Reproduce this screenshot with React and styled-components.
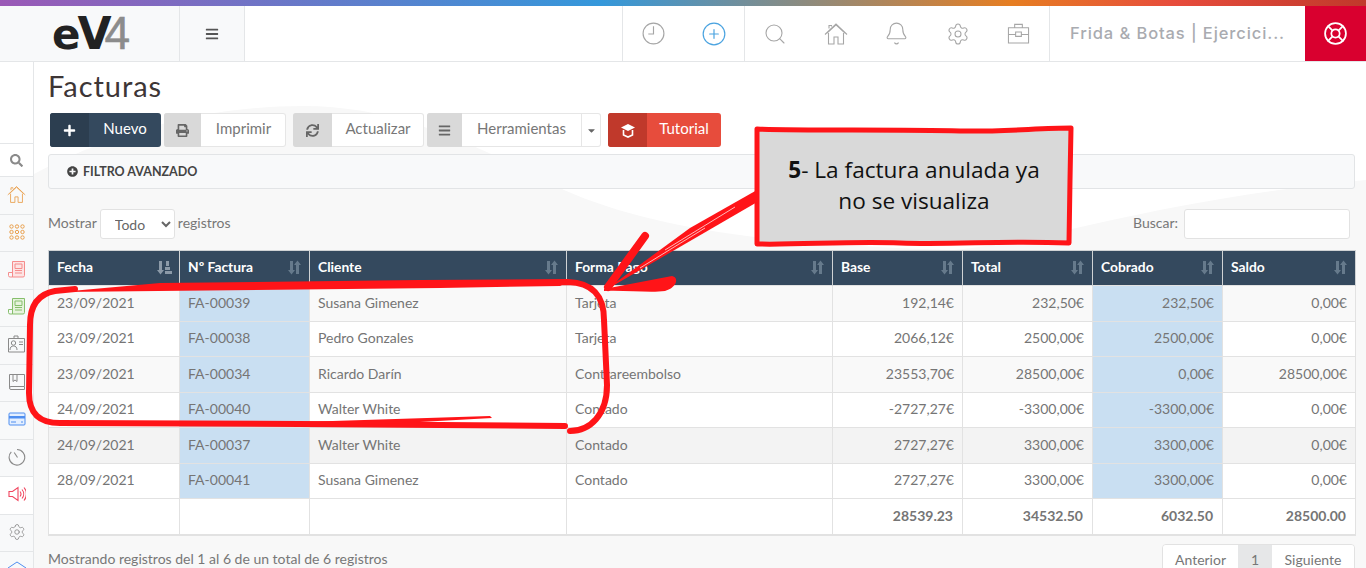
import React from 'react';
import styled, { createGlobalStyle } from 'styled-components';
import { Search, Bell, Settings, LifeBuoy, CirclePlus } from 'lucide-react';
import { FaPlus, FaPrint, FaSync, FaBars, FaCaretDown, FaPlusCircle, FaSearch } from 'react-icons/fa';

const GlobalStyle = createGlobalStyle`
  html, body { margin: 0; padding: 0; background: #fff; }
  body { font-family: "Lato", "Open Sans", sans-serif; color: #666; }
`;

const Shell = styled.div`
  position: relative;
  height: 100vh;
  overflow: hidden;
  background: #fff;
`;

const Stripe = styled.div`
  height: 6px;
  background: linear-gradient(90deg, #9b59b6 0%, #3498db 44%, #e67e22 74%, #e74c3c 86%, #c0392b 100%);
`;

const TopBar = styled.header`
  display: flex;
  height: 56px;
  border-bottom: 1px solid #e4e6e8;
  box-sizing: border-box;
`;

const LogoCell = styled.div`
  width: 180px;
  box-sizing: border-box;
  padding: 0 0 1px 52px;
  background: #f8f9fa;
  border-right: 1px solid #e4e6e8;
  display: flex;
  align-items: baseline;
  font-family: "DejaVu Sans", sans-serif;
  font-size: 44px;
  line-height: 54px;
  font-weight: 700;
  color: #222;
`;

const LogoE = styled.span`
  font-size: 42px;
  letter-spacing: -3px;
`;

const LogoV = styled.span`
  letter-spacing: -7px;
`;

const LogoFour = styled.span`
  font-family: "Liberation Sans", sans-serif;
  font-size: 46px;
  font-weight: 400;
  color: #8c8c8c;
  -webkit-text-stroke: 0.6px #8c8c8c;
`;

const MenuCell = styled.div`
  width: 65px;
  box-sizing: border-box;
  background: #f8f9fa;
  border-right: 1px solid #e4e6e8;
  display: flex;
  align-items: center;
  justify-content: center;
  color: #555;
  font-size: 14px;
`;

const Spacer = styled.div`
  flex: 1;
`;

const IconGroup = styled.div`
  display: flex;
  width: ${(p) => p.$w}px;
  box-sizing: border-box;
  border-left: 1px solid #e4e6e8;
`;

const TopIcon = styled.div`
  flex: 1;
  display: flex;
  align-items: center;
  justify-content: center;
  color: ${(p) => (p.$active ? '#4aa3e0' : '#a6a6a6')};
`;

const CompanyCell = styled.div`
  width: 256px;
  box-sizing: border-box;
  padding: 0 0 2px 20px;
  border-left: 1px solid #e4e6e8;
  display: flex;
  align-items: center;
  font-family: "Inter", sans-serif;
  font-size: 16.5px;
  font-weight: 500;
  letter-spacing: 0.9px;
  color: #a9abb0;
  white-space: nowrap;
`;

const HelpCell = styled.div`
  width: 61px;
  background: #d9002f;
  display: flex;
  align-items: center;
  justify-content: center;
  color: #fff;
`;

const Body = styled.div`
  display: flex;
`;

const Sidebar = styled.nav`
  width: 34px;
  flex: none;
  box-sizing: border-box;
  padding-top: 81px;
  border-right: 1px solid #e4e6e8;
`;

const SideItem = styled.div`
  height: ${(p) => (p.$short ? '33px' : '37.5px')};
  box-sizing: border-box;
  border-top: 1px solid #e4e6e8;
  padding-bottom: ${(p) => (p.$short ? 0 : 2)}px;
  background: ${(p) => (p.$plain ? '#fff' : '#f8f9fa')};
  display: flex;
  align-items: center;
  justify-content: center;
  color: ${(p) => p.$color || '#8a8a8a'};
`;

const Main = styled.main`
  position: relative;
  flex: 1;
  min-width: 0;
  padding: 7px 11px 0 14px;
`;

const Swoosh = styled.svg`
  position: absolute;
  left: 0;
  top: 0;
  width: 100%;
  height: 506px;
`;

const Content = styled.div`
  position: relative;
`;

const Title = styled.h1`
  margin: 0;
  font-size: 29px;
  line-height: 34px;
  font-weight: 400;
  letter-spacing: 0.95px;
  color: #3d3636;
`;

const Toolbar = styled.div`
  display: flex;
  gap: 3px;
  margin: 10px 0 0 2px;
  height: 34px;
`;

const Btn = styled.div`
  display: flex;
  margin-left: ${(p) => p.$offset || 0}px;
  border-radius: 3px;
  overflow: hidden;
  font-size: 15px;
  background: ${(p) => p.$bg || '#fff'};
  color: ${(p) => (p.$bg ? '#fff' : '#777')};
  box-shadow: ${(p) => (p.$bg ? 'none' : 'inset 0 0 0 1px #e6e6e6')};
`;

const BtnIcon = styled.span`
  width: ${(p) => p.$w}px;
  display: flex;
  align-items: center;
  justify-content: center;
  background: ${(p) => p.$bg || '#d9d9d9'};
  color: ${(p) => (p.$bg ? '#fff' : '#666')};
  font-size: 13px;
`;

const BtnLabel = styled.span`
  width: ${(p) => p.$w}px;
  box-sizing: border-box;
  padding-bottom: 4px;
  display: flex;
  align-items: center;
  justify-content: center;
`;

const BtnCaret = styled.span`
  width: 19px;
  display: flex;
  align-items: center;
  justify-content: center;
  border-left: 1px solid #e6e6e6;
  font-size: 11px;
  color: #666;
`;

const FilterPanel = styled.div`
  height: 35px;
  box-sizing: border-box;
  margin-top: 7px;
  padding: 0 0 1px 18px;
  display: flex;
  align-items: center;
  gap: 5px;
  background: #f8f9fa;
  border: 1px solid #e2e4e6;
  border-radius: 3px;
  font-size: 12.5px;
  font-weight: 700;
  color: #444;
  svg { font-size: 11px; }
`;

const ControlRow = styled.div`
  display: flex;
  align-items: center;
  justify-content: space-between;
  margin-top: 20px;
  height: 30px;
  padding-right: 5px;
  font-size: 14px;
  color: #777;
`;

const ControlSide = styled.div`
  display: flex;
  align-items: center;
  gap: 3px;
`;

const ControlLabel = styled.span`
  margin-bottom: 3px;
`;

const PageSize = styled.select`
  width: 75px;
  height: 30px;
  padding-left: 10px;
  background: #fff;
  border: 1px solid #e2e2e2;
  border-radius: 3px;
  font: inherit;
  color: #666;
`;

const SearchBox = styled.input`
  width: 166px;
  height: 30px;
  box-sizing: border-box;
  margin-left: 3px;
  background: #fff;
  border: 1px solid #e2e2e2;
  border-radius: 3px;
`;

const Table = styled.table`
  width: 1307px;
  margin-top: 11px;
  table-layout: fixed;
  border-collapse: collapse;
  font-size: 14px;
  color: #757575;
`;

const HeadCell = styled.th`
  position: relative;
  height: 35px;
  padding: 0 8px 4px;
  box-sizing: border-box;
  background: #34495e;
  border: 1px solid #cfd2d4;
  border-width: 1px 1px 0;
  color: #fff;
  font-size: 13.8px;
  font-weight: 700;
  text-align: left;
`;

const SortMark = styled.svg`
  position: absolute;
  right: 7px;
  top: 9px;
  width: 15px;
  height: 15px;
  fill: ${(p) => (p.$active ? '#8c9aa8' : '#667a8c')};
`;

const Row = styled.tr`
  height: 35.5px;
  background: ${(p) => p.$bg};
`;

const Cell = styled.td`
  padding: 0 8px 2px;
  box-sizing: border-box;
  border: 1px solid #e2e2e2;
  text-align: ${(p) => (p.$right ? 'right' : 'left')};
  background: ${(p) => (p.$blue ? '#c9dff2' : 'transparent')};
`;

const TotalCell = styled(Cell)`
  height: 36px;
  padding-right: 9px;
  font-weight: 700;
  background: #fff;
  border-bottom: 2px solid #e2e2e2;
`;

const FooterRow = styled.div`
  display: flex;
  align-items: flex-start;
  justify-content: space-between;
  margin-top: 8px;
  font-size: 14px;
  color: #777;
`;

const Summary = styled.span`
  margin-top: 6px;
`;

const Pager = styled.div`
  display: flex;
  height: 32px;
  border: 1px solid #e2e2e2;
  border-radius: 4px;
  overflow: hidden;
`;

const PagerItem = styled.span`
  width: ${(p) => p.$w}px;
  padding-top: 6px;
  text-align: center;
  background: ${(p) => (p.$current ? '#e6e7e8' : '#fff')};
`;

const Annotation = styled.svg`
  position: absolute;
  left: 0;
  top: 0;
  width: 1366px;
  height: 568px;
  pointer-events: none;
`;

const CalloutText = styled.div`
  position: absolute;
  left: 760px;
  top: 154px;
  width: 308px;
  font-family: "Open Sans", sans-serif;
  font-size: 22.6px;
  line-height: 31px;
  text-align: center;
  color: #111;
  b { font-weight: 700; }
`;

const ClockIcon = () => (
  <svg width="25" height="25" viewBox="0 0 24 24" fill="none" stroke="currentColor" strokeWidth="1.1">
    <circle cx="12" cy="12" r="10" />
    <path d="M12 5v7.500H7" />
  </svg>
);

const HomeIcon = ({ size }) => (
  <svg width={size} height={size} viewBox="0 0 24 24" fill="none" stroke="currentColor" strokeWidth="1.1">
    <path d="M1 12.500L12 2l11 10.500M3 11L12 2.800 21 11" />
    <path d="M4.500 11v11h5.500v-7h4v7h5.500V11M5 6.500V3.500h2.500v1" />
  </svg>
);

const CaseIcon = () => (
  <svg width="23" height="23" viewBox="0 0 24 24" fill="none" stroke="currentColor" strokeWidth="1.1">
    <path d="M1.500 6h21v16h-21zM8 6V2.500h8V6M1.500 13h7.500M15 13h7.500M9 10.500h6v4.500H9z" />
  </svg>
);

const DotsIcon = () => (
  <svg width="16" height="16" viewBox="0 0 16 16" fill="none" stroke="currentColor">
    {[2.500, 8, 13.500].map((y) => [2.500, 8, 13.500].map((x) => (
      <circle key={`${x}-${y}`} cx={x} cy={y} r="1.700" />
    )))}
  </svg>
);

const InvoiceIcon = ({ tint }) => (
  <svg width="17" height="17" viewBox="0 0 17 17" fill="none" stroke="currentColor" strokeWidth="1">
    <path d="M4.500 16V0.500h12V14.500A1.500 1.500 0 0 1 15 16z" fill={tint} />
    <path d="M4.500 16H2A1.500 1.500 0 0 1 0.500 14.500V11.500h4" />
    <path d="M7 3h7v4.500H7zM7 9.500h7M7 12h7" />
  </svg>
);

const BadgeIcon = () => (
  <svg width="17" height="18" viewBox="0 0 17 18" fill="none" stroke="currentColor" strokeWidth="1">
    <path d="M0.500 3.500h16v13.500H0.500zM6 3.500V1h4v2.500" />
    <circle cx="5.500" cy="8" r="2.200" />
    <path d="M2 15c0-3 1.500-4 3.500-4s3.500 1 3.500 4M11 7h4M11 9.500h4" />
  </svg>
);

const BookIcon = () => (
  <svg width="18" height="18" viewBox="0 0 18 18" fill="none" stroke="currentColor" strokeWidth="1">
    <path d="M1.500 14.500V1.500h15v12H3A1.500 1.500 0 0 0 3 16.500h13.500V13.500" />
    <path d="M5 1.500v7l2-1.500 2 1.500v-7" />
  </svg>
);

const CardIcon = () => (
  <svg width="18" height="18" viewBox="0 0 18 18">
    <rect x="1" y="3" width="16" height="12" rx="1" fill="#e4efff" stroke="currentColor" />
    <path d="M1 6h16v2.500H1z" fill="currentColor" />
    <path d="M3 12h5M13 12h2" stroke="currentColor" />
  </svg>
);

const DialIcon = () => (
  <svg width="18" height="18" viewBox="0 0 18 18" fill="none" stroke="currentColor" strokeWidth="1.1">
    <path d="M9 1.500A7.800 7.800 0 1 1 3.300 3.900" />
    <path d="M9.500 9.500L6.200 4.500" />
  </svg>
);

const SpeakerIcon = () => (
  <svg width="18" height="18" viewBox="0 0 18 18" fill="none" stroke="currentColor" strokeWidth="1.1">
    <path d="M1 6.500h3.500L10 2.500v13l-5.500-4H1z" />
    <path d="M12 6.500a4 4 0 0 1 0 5M14 4.500a7 7 0 0 1 0 9M16 2.500a10 10 0 0 1 0 13" />
  </svg>
);

const CapIcon = () => (
  <svg width="20" height="20" viewBox="0 0 20 20" fill="none" stroke="currentColor">
    <path d="M1 9l9-6 9 6-9 6zM5 12v5l5 2 5-2v-5" />
  </svg>
);

const TutorialIcon = () => (
  <svg width="16" height="15" viewBox="0 0 16 15">
    <path d="M8 1L15 4.500 8 8 1 4.500z" fill="#fff" />
    <path d="M3.500 7v5L8 14l4.500-2V7" fill="none" stroke="#fff" strokeWidth="1.600" />
  </svg>
);

const SortIcon = ({ active }) => (
  <SortMark viewBox="0 0 15 15" $active={active}>
    {active ? (
      <path d="M2 1h3v9h2l-3.500 4.500L0 10h2zM9 1h3v5H9zM8 7h5v3H8zM8 11h7v3H8z" />
    ) : (
      <path d="M3 1h3v9h2l-3.500 4.500L1 10h2zM9 5H7l3.500-4.500L14 5h-2v9H9z" />
    )}
  </SortMark>
);

const columns = [
  { name: 'Fecha', width: 131, active: true },
  { name: 'Nº Factura', width: 130 },
  { name: 'Cliente', width: 257 },
  { name: 'Forma Pago', width: 266 },
  { name: 'Base', width: 130 },
  { name: 'Total', width: 130 },
  { name: 'Cobrado', width: 130 },
  { name: 'Saldo', width: 133 },
];

const rows = [
  ['23/09/2021', 'FA-00039', 'Susana Gimenez', 'Tarjeta', '192,14€', '232,50€', '232,50€', '0,00€', '#f9f9f9'],
  ['23/09/2021', 'FA-00038', 'Pedro Gonzales', 'Tarjeta', '2066,12€', '2500,00€', '2500,00€', '0,00€', '#fff'],
  ['23/09/2021', 'FA-00034', 'Ricardo Darín', 'Contrareembolso', '23553,70€', '28500,00€', '0,00€', '28500,00€', '#f9f9f9'],
  ['24/09/2021', 'FA-00040', 'Walter White', 'Contado', '-2727,27€', '-3300,00€', '-3300,00€', '0,00€', '#fff'],
  ['24/09/2021', 'FA-00037', 'Walter White', 'Contado', '2727,27€', '3300,00€', '3300,00€', '0,00€', '#f3f3f3'],
  ['28/09/2021', 'FA-00041', 'Susana Gimenez', 'Contado', '2727,27€', '3300,00€', '3300,00€', '0,00€', '#fff'],
];

const totals = ['', '', '', '', '28539.23', '34532.50', '6032.50', '28500.00'];

const sideItems = [
  { icon: <FaSearch size={13} />, plain: true, short: true },
  { icon: <HomeIcon size={19} />, color: '#e9a04e' },
  { icon: <DotsIcon />, color: '#e9a04e' },
  { icon: <InvoiceIcon tint="#fde4e4" />, color: '#f58c8c' },
  { icon: <InvoiceIcon tint="#e6f3dd" />, color: '#86bf6c' },
  { icon: <BadgeIcon /> },
  { icon: <BookIcon /> },
  { icon: <CardIcon />, color: '#4f8ef0' },
  { icon: <DialIcon /> },
  { icon: <SpeakerIcon />, color: '#f0465f', plain: true },
  { icon: <Settings size={18} strokeWidth={1.1} /> },
  { icon: <CapIcon />, color: '#4f8ef0' },
];

const App = () => {
  return (
    <Shell>
      <GlobalStyle />
      <Stripe />
      <TopBar>
        <LogoCell><LogoE>e</LogoE><LogoV>V</LogoV><LogoFour>4</LogoFour></LogoCell>
        <MenuCell><FaBars /></MenuCell>
        <Spacer />
        <IconGroup $w={122}>
          <TopIcon><ClockIcon /></TopIcon>
          <TopIcon $active><CirclePlus size={26} strokeWidth={1.1} /></TopIcon>
        </IconGroup>
        <IconGroup $w={305}>
          <TopIcon><Search size={24} strokeWidth={1.1} /></TopIcon>
          <TopIcon><HomeIcon size={24} /></TopIcon>
          <TopIcon><Bell size={25} strokeWidth={1.05} /></TopIcon>
          <TopIcon><Settings size={24} strokeWidth={1.05} /></TopIcon>
          <TopIcon><CaseIcon /></TopIcon>
        </IconGroup>
        <CompanyCell>Frida &amp; Botas | Ejercici...</CompanyCell>
        <HelpCell><LifeBuoy size={25} strokeWidth={1.7} /></HelpCell>
      </TopBar>
      <Body>
        <Sidebar>
          {sideItems.map((item, i) => (
            <SideItem key={i} $color={item.color} $plain={item.plain} $short={item.short}>
              {item.icon}
            </SideItem>
          ))}
        </Sidebar>
        <Main>
          <Swoosh viewBox="0 0 1332 506" preserveAspectRatio="none">
            <path d="M0 112C80 70 170 44 270 44C370 44 450 88 530 128C620 168 750 184 920 188C1020 178 1120 138 1332 118V506H0Z" fill="#f8f8f8" />
          </Swoosh>
          <Content>
            <Title>Facturas</Title>
            <Toolbar>
              <Btn $bg="#34495e">
                <BtnIcon $w={39} $bg="#2c3e50"><FaPlus /></BtnIcon>
                <BtnLabel $w={72}>Nuevo</BtnLabel>
              </Btn>
              <Btn>
                <BtnIcon $w={37}><FaPrint /></BtnIcon>
                <BtnLabel $w={85}>Imprimir</BtnLabel>
              </Btn>
              <Btn $offset={4}>
                <BtnIcon $w={39}><FaSync /></BtnIcon>
                <BtnLabel $w={92}>Actualizar</BtnLabel>
              </Btn>
              <Btn>
                <BtnIcon $w={35}><FaBars /></BtnIcon>
                <BtnLabel $w={119}>Herramientas</BtnLabel>
                <BtnCaret><FaCaretDown /></BtnCaret>
              </Btn>
              <Btn $bg="#e74c3c" $offset={4}>
                <BtnIcon $w={39} $bg="#c0392b"><TutorialIcon /></BtnIcon>
                <BtnLabel $w={74}>Tutorial</BtnLabel>
              </Btn>
            </Toolbar>
            <FilterPanel><FaPlusCircle />FILTRO AVANZADO</FilterPanel>
            <ControlRow>
              <ControlSide>
                <ControlLabel>Mostrar</ControlLabel>
                <PageSize defaultValue="Todo">
                  <option>Todo</option>
                </PageSize>
                <ControlLabel>registros</ControlLabel>
              </ControlSide>
              <ControlSide>
                <ControlLabel>Buscar:</ControlLabel>
                <SearchBox />
              </ControlSide>
            </ControlRow>
            <Table>
              <colgroup>
                {columns.map((c) => <col key={c.name} width={c.width} />)}
              </colgroup>
              <thead>
                <tr>
                  {columns.map((c) => (
                    <HeadCell key={c.name}>
                      {c.name}
                      <SortIcon active={c.active} />
                    </HeadCell>
                  ))}
                </tr>
              </thead>
              <tbody>
                {rows.map((r) => (
                  <Row key={r[1]} $bg={r[8]}>
                    {r.slice(0, 8).map((value, i) => (
                      <Cell key={i} $right={i > 3} $blue={i === 1 || i === 6}>{value}</Cell>
                    ))}
                  </Row>
                ))}
              </tbody>
              <tfoot>
                <tr>
                  {totals.map((value, i) => (
                    <TotalCell key={i} $right>{value}</TotalCell>
                  ))}
                </tr>
              </tfoot>
            </Table>
            <FooterRow>
              <Summary>Mostrando registros del 1 al 6 de un total de 6 registros</Summary>
              <Pager>
                <PagerItem $w={75}>Anterior</PagerItem>
                <PagerItem $w={34} $current>1</PagerItem>
                <PagerItem $w={82}>Siguiente</PagerItem>
              </Pager>
            </FooterRow>
          </Content>
        </Main>
      </Body>
      <Annotation viewBox="0 0 1366 568">
        <path d="M757 129C800 131 900 129 960 131C1000 132 1040 128 1071 128L1070 180L1069 243C1000 240 960 245 900 243C850 241 800 245 757 244L757 200Z" fill="#d9d9d9" stroke="#ff1418" strokeWidth="5" strokeLinejoin="round" />
        <g fill="none" stroke="#ff1418" strokeLinecap="round">
          <path d="M75 289L55 291C38 294 30 306 30 325L29 393C29 414 40 423 60 423L300 424L565 426" strokeWidth="6" />
          <path d="M420 283L568 282C592 283 604 295 604 320L607 385C607 415 590 431 570 431" strokeWidth="6" />
          <path d="M645 236L608 287" strokeWidth="8" />
        </g>
        <g fill="#ff1418">
          <path d="M160 283L420 280L570 281L560 286L440 288L60 292Z" />
          <path d="M240 424L490 416L492 418L330 427Z" />
          <path d="M757 190L759 201L604 291L690 228Z" />
          <path d="M604 289L672 276C680 278 676 288 665 291C650 293 625 290 604 291Z" />
        </g>
        <path d="M735 207L665 250M705 228L640 268" fill="none" stroke="#fff" strokeWidth="0.7" />
      </Annotation>
      <CalloutText><b>5</b>- La factura anulada ya<br />no se visualiza</CalloutText>
    </Shell>
  );
};

export default App;
